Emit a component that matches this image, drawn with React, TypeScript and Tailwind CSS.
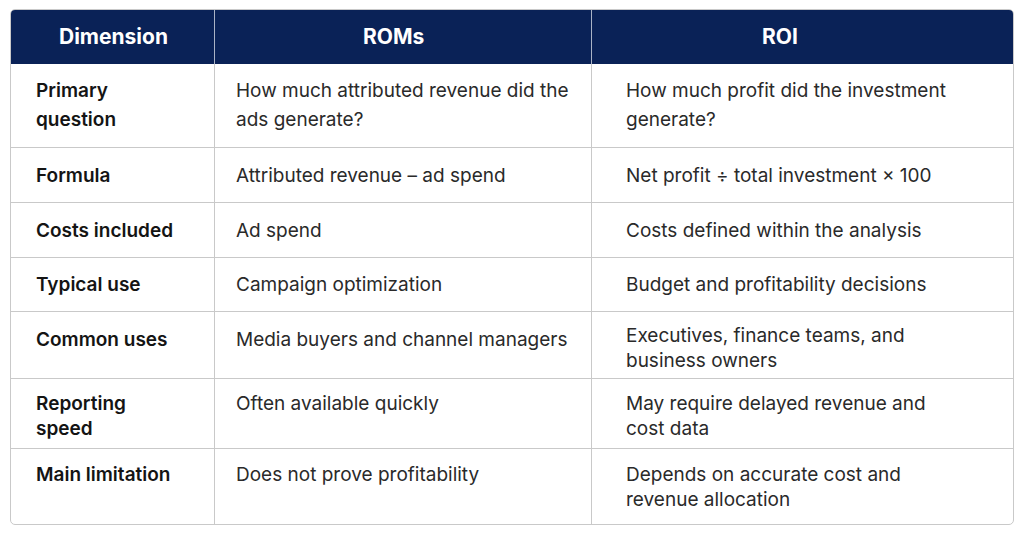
import React from 'react';

type Row = {
  label: string[];
  roms: string[];
  roi: string[];
  h: string;
  pt: string;
  ptRoi: string;
  leading: string;
};

const rows: Row[] = [
  {
    label: ['Primary', 'question'],
    roms: ['How much attributed revenue did the', 'ads generate?'],
    roi: ['How much profit did the investment', 'generate?'],
    h: 'h-[84px]',
    pt: 'pt-[12px]',
    ptRoi: 'pt-[12px]',
    leading: 'leading-[29px]',
  },
  {
    label: ['Formula'],
    roms: ['Attributed revenue – ad spend'],
    roi: ['Net profit ÷ total investment × 100'],
    h: 'h-[55px]',
    pt: 'pt-[15px]',
    ptRoi: 'pt-[15px]',
    leading: 'leading-[25px]',
  },
  {
    label: ['Costs included'],
    roms: ['Ad spend'],
    roi: ['Costs defined within the analysis'],
    h: 'h-[55px]',
    pt: 'pt-[15px]',
    ptRoi: 'pt-[15px]',
    leading: 'leading-[25px]',
  },
  {
    label: ['Typical use'],
    roms: ['Campaign optimization'],
    roi: ['Budget and profitability decisions'],
    h: 'h-[54px]',
    pt: 'pt-[14px]',
    ptRoi: 'pt-[14px]',
    leading: 'leading-[25px]',
  },
  {
    label: ['Common uses'],
    roms: ['Media buyers and channel managers'],
    roi: ['Executives, finance teams, and', 'business owners'],
    h: 'h-[67px]',
    pt: 'pt-[15px]',
    ptRoi: 'pt-[11px]',
    leading: 'leading-[25px]',
  },
  {
    label: ['Reporting', 'speed'],
    roms: ['Often available quickly'],
    roi: ['May require delayed revenue and', 'cost data'],
    h: 'h-[70px]',
    pt: 'pt-[12px]',
    ptRoi: 'pt-[12px]',
    leading: 'leading-[25px]',
  },
  {
    label: ['Main limitation'],
    roms: ['Does not prove profitability'],
    roi: ['Depends on accurate cost and', 'revenue allocation'],
    h: 'h-[75px]',
    pt: 'pt-[13px]',
    ptRoi: 'pt-[13px]',
    leading: 'leading-[25px]',
  },
];

const Lines: React.FC<{ lines: string[] }> = ({ lines }) => (
  <>
    {lines.map((line) => (
      <span key={line} className="block whitespace-nowrap">
        {line}
      </span>
    ))}
  </>
);

const App: React.FC = () => {
  return (
    <div className="w-[1024px] h-[538px] bg-white pt-[9px] pl-[10px] font-['Inter',sans-serif]">
      <div className="w-[1004px] border border-[#c9c9c9] rounded-[5px] overflow-hidden">
        <div className="grid grid-cols-[204px_377px_1fr] h-[54px] bg-[#0a2257] text-white text-[21px] font-bold">
          <div className="flex items-center pl-[48px] border-r border-[#aab3c6]">Dimension</div>
          <div className="flex items-center pl-[148px] border-r border-[#aab3c6]">ROMs</div>
          <div className="flex items-center pl-[170px]">ROI</div>
        </div>

        {rows.map((row, i) => (
          <div
            key={row.label.join(' ')}
            className={`grid grid-cols-[204px_377px_1fr] text-[19px] ${row.h} ${row.leading} ${
              i < rows.length - 1 ? 'border-b border-[#c9c9c9]' : ''
            }`}
          >
            <div className={`pl-[25px] ${row.pt} border-r border-[#c9c9c9] font-semibold text-[#141414]`}>
              <Lines lines={row.label} />
            </div>
            <div className={`pl-[21px] ${row.pt} border-r border-[#c9c9c9] text-[#2a2a2a]`}>
              <Lines lines={row.roms} />
            </div>
            <div className={`pl-[34px] ${row.ptRoi} text-[#2a2a2a]`}>
              <Lines lines={row.roi} />
            </div>
          </div>
        ))}
      </div>
    </div>
  );
};

export default App;
